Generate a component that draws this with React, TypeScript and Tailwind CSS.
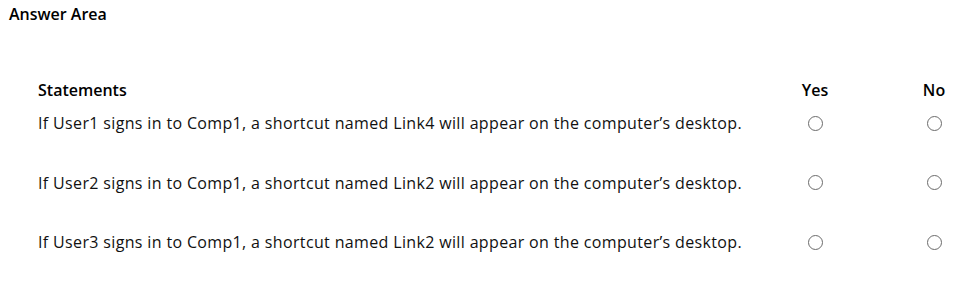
import React from "react";

const rows = [
  "If User1 signs in to Comp1, a shortcut named Link4 will appear on the computer\u2019s desktop.",
  "If User2 signs in to Comp1, a shortcut named Link2 will appear on the computer\u2019s desktop.",
  "If User3 signs in to Comp1, a shortcut named Link2 will appear on the computer\u2019s desktop.",
];

function Radio() {
  return (
    <span className="block w-[15px] h-[15px] rounded-full border border-[#6b6b6b] bg-white" />
  );
}

export default function App() {
  return (
    <div
      className="w-[976px] h-[281px] bg-white text-[#111] overflow-hidden"
      style={{ fontFamily: '"Open Sans", "Noto Sans", sans-serif' }}
    >
      <div className="pl-[9px] pt-[4px] text-[16px] leading-[20px] font-semibold text-black">
        Answer Area
      </div>
      <div className="pl-[38px] pt-[56px]">
        <div className="grid grid-cols-[757px_40px_79px_40px] items-center">
          <div className="text-[16px] leading-[20px] font-semibold text-black">Statements</div>
          <div className="text-[16px] leading-[20px] font-semibold text-black text-center">Yes</div>
          <div />
          <div className="text-[16px] leading-[20px] font-semibold text-black text-center">No</div>
        </div>
        <div className="flex flex-col gap-[39.5px] pt-[13px]">
          {rows.map((r, i) => (
            <div key={i} className="grid grid-cols-[757px_40px_79px_40px] items-center h-[20px]">
              <div className="text-[16px] leading-[20px] tracking-[0.35px] whitespace-nowrap">{r}</div>
              <div className="flex justify-center"><Radio /></div>
              <div />
              <div className="flex justify-center"><Radio /></div>
            </div>
          ))}
        </div>
      </div>
    </div>
  );
}
